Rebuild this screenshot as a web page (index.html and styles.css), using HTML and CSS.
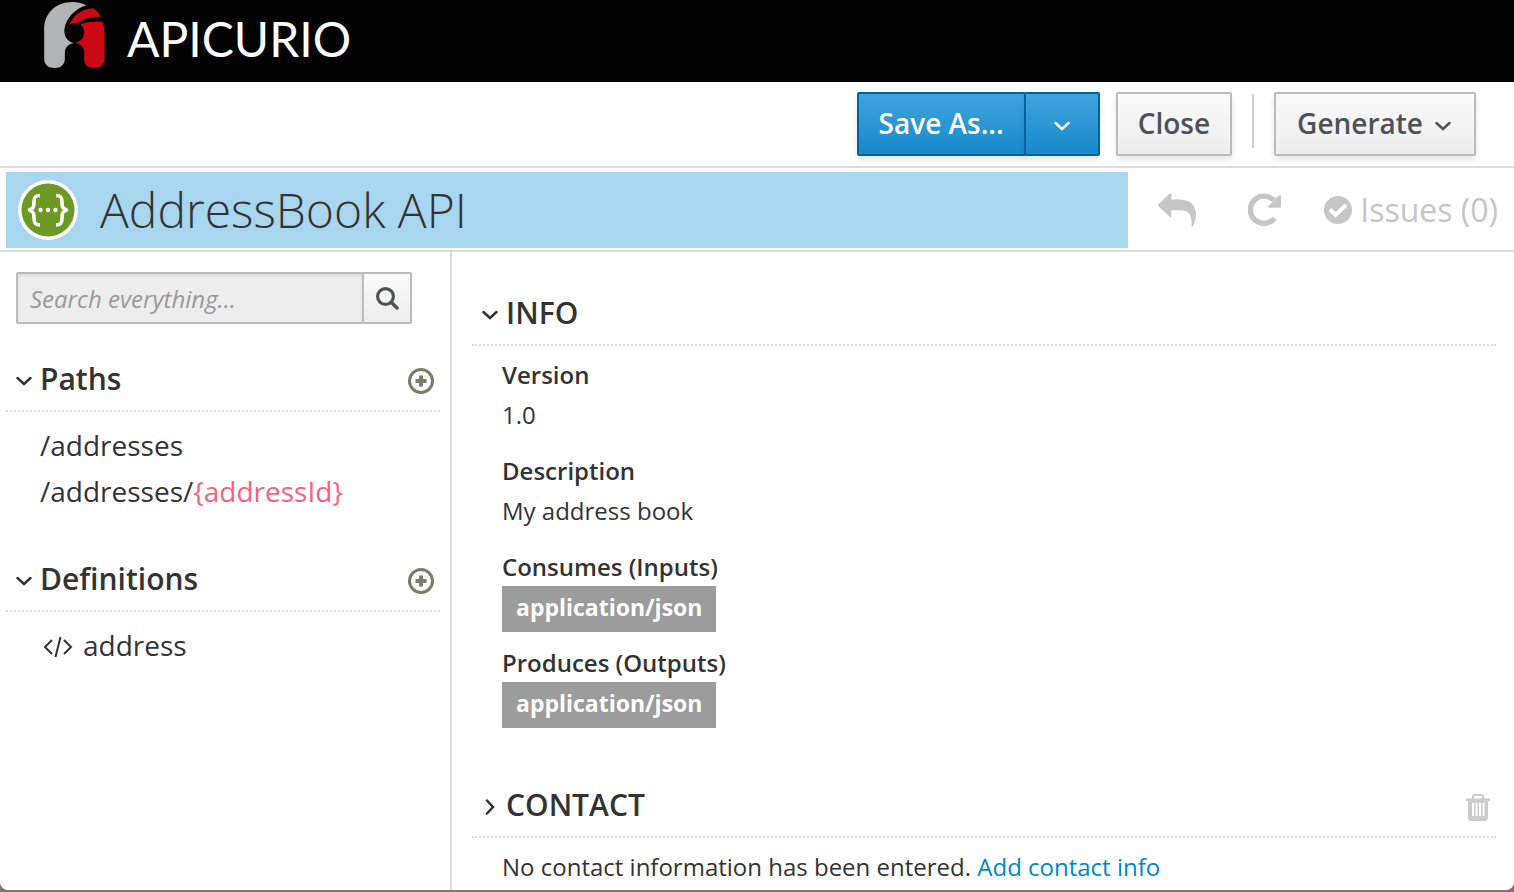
FILE: index.html
```html
<!DOCTYPE html>
<html lang="en">
<head>
<meta charset="utf-8">
<title>Apicurio - AddressBook API</title>
<link rel="stylesheet" href="styles.css">
</head>
<body>
<svg class="defs" aria-hidden="true">
  <symbol id="chev-down" viewBox="0 0 16 10"><path d="M1.500 2 8 8l6.500-6" fill="none" stroke="currentColor" stroke-width="2.500" stroke-linecap="round"/></symbol>
  <symbol id="chev-right" viewBox="0 0 10 16"><path d="M2 1.500 8 8l-6 6.500" fill="none" stroke="currentColor" stroke-width="2.500" stroke-linecap="round"/></symbol>
  <symbol id="plus" viewBox="0 0 26 26"><circle cx="13" cy="13" r="11.500" fill="none" stroke="currentColor" stroke-width="3"/><path d="M13 7.500v11M7.500 13h11" stroke="currentColor" stroke-width="4"/></symbol>
</svg>
<div class="window">
  <header class="masthead">
    <svg class="brand-mark" viewBox="42 7 182 198" aria-hidden="true">
      <path fill="#b1b3b5" d="M42 178V88C42 40 78 7 127 7c16 0 31 4 42 10-34 9-61 39-66 70-3 21 8 38 28 43-18 4-27 14-27 30v18c0 17-12 27-31 27s-31-10-31-27z"/>
      <path fill="#cb0813" d="M117 77c12-28 35-50 73-51 9 6 17 15 21 25-27-1-52 7-71 20-9-2-16 1-23 6z"/>
      <path fill="#cb0813" d="M152 74c20-8 43-10 65-7 4 10 6 20 6 32v79c0 17-12 27-31 27s-30-10-30-27v-18c0-17-9-27-27-30 28-6 35-36 17-56z"/>
    </svg>
    <span class="brand-name">APICURIO</span>
  </header>
  <div class="toolbar">
    <div class="split">
      <button class="btn primary">Save As...</button>
      <button class="btn primary toggle" aria-label="More save options"><svg class="chev"><use href="#chev-down"/></svg></button>
    </div>
    <button class="btn">Close</button>
    <span class="divider"></span>
    <button class="btn generate">Generate <svg class="chev"><use href="#chev-down"/></svg></button>
  </div>
  <div class="titlebar">
    <div class="title">
      <svg class="api-icon" viewBox="0 0 60 60" aria-hidden="true">
        <circle cx="30" cy="30" r="30" fill="#fff"/><circle cx="30" cy="30" r="26.500" fill="#6d9a25"/>
        <g fill="none" stroke="#fff" stroke-width="3.600" stroke-linejoin="round"><path d="M22 15.500c-5 0-6 2-6 6 0 5 0 7-4.500 8.500C16 31.500 16 34 16 38.500c0 4 1 6.500 6 6.500M38 15.500c5 0 6 2 6 6 0 5 0 7 4.500 8.500-4.500 1.500-4.500 4-4.500 8.500 0 4-1 6.500-6 6.500"/></g>
        <g fill="#fff"><circle cx="22.500" cy="30" r="2.200"/><circle cx="30" cy="30" r="2.200"/><circle cx="37.500" cy="30" r="2.200"/></g>
      </svg>
      <h1>AddressBook API</h1>
    </div>
    <div class="actions">
      <button class="icon-btn" aria-label="Undo"><svg width="38" height="34" viewBox="0 0 114 101"><path fill="currentColor" d="M1 33 35 1q4-2 5 2v16h28c28 1 46 19 46 45 0 15-5 28-10 36q-4 2-3-2c1-32-8-46-33-47H40v18q-1 5-5 2L1 39q-2-3 0-6z"/></svg></button>
      <button class="icon-btn redo" aria-label="Redo"><svg width="33" height="34" viewBox="0 0 99 102"><path fill="none" stroke="currentColor" stroke-width="16" d="M80 76A41 41 0 1 1 78 22"/><path fill="currentColor" d="M96 7q3 0 3 3v31q0 3-3 3H64q-5-1-2-5L92 8q2-2 4-1z"/></svg></button>
      <button class="icon-btn issues"><svg width="28" height="28" viewBox="0 0 28 28"><circle cx="14" cy="14" r="14" fill="currentColor"/><path d="m6 13.500 5.500 5.500L22 9" fill="none" stroke="#fff" stroke-width="4"/></svg>Issues (0)</button>
    </div>
  </div>
  <div class="body">
    <nav class="sidebar">
      <form class="search">
        <input type="text" aria-label="Search everything" placeholder="Search everything...">
        <button type="button" aria-label="Search"><svg width="23" height="23" viewBox="0 0 23 23"><g fill="none" stroke="currentColor"><circle cx="9.500" cy="9.500" r="7.900" stroke-width="3.200"/><path d="m15.500 15.500 5.500 5.500" stroke-width="3.600" stroke-linecap="round"/></g></svg></button>
      </form>
      <section class="nav-group">
        <h2 class="heading"><svg class="chev"><use href="#chev-down"/></svg>Paths<button class="icon-btn add" aria-label="Add path"><svg width="26" height="26"><use href="#plus"/></svg></button></h2>
        <ul>
          <li><a href="#">/addresses</a></li>
          <li><a href="#">/addresses/<span class="param">{addressId}</span></a></li>
        </ul>
      </section>
      <section class="nav-group">
        <h2 class="heading"><svg class="chev"><use href="#chev-down"/></svg>Definitions<button class="icon-btn add" aria-label="Add definition"><svg width="26" height="26"><use href="#plus"/></svg></button></h2>
        <ul>
          <li><a href="#" class="definition"><svg width="30" height="22" viewBox="0 0 30 22"><path d="M9 4 2 11l7 7M21 4l7 7-7 7M17.500 1l-5 20" fill="none" stroke="currentColor" stroke-width="2"/></svg>address</a></li>
        </ul>
      </section>
    </nav>
    <main class="content">
      <section>
        <h2 class="heading"><svg class="chev"><use href="#chev-down"/></svg>INFO</h2>
        <dl>
          <dt>Version</dt><dd>1.0</dd>
          <dt>Description</dt><dd>My address book</dd>
          <dt>Consumes (Inputs)</dt><dd><span class="tag">application/json</span></dd>
          <dt>Produces (Outputs)</dt><dd><span class="tag">application/json</span></dd>
        </dl>
      </section>
      <section>
        <h2 class="heading"><svg class="chev side"><use href="#chev-right"/></svg>CONTACT<button class="icon-btn trash" aria-label="Delete contact"><svg width="24" height="27" viewBox="0 0 24 27"><path fill="none" stroke="currentColor" stroke-width="2" d="M7 5V3q0-2 2-2h6q2 0 2 2v2"/><path fill="currentColor" fill-rule="evenodd" d="M0 4.500h24v2.500h-2V24q0 3-3 3H5q-3 0-3-3V7H0zM6 9v13h2V9zm3.500 0v13h2V9zm3.500 0v13h2V9zm3.500 0v13h2V9z"/></svg></button></h2>
        <p>No contact information has been entered. <a href="#">Add contact info</a></p>
      </section>
    </main>
  </div>
</div>
</body>
</html>
```
FILE: styles.css
```css
* { box-sizing: border-box; }
body { margin: 0; background: #777; color: #333; font: 24px/40px "Open Sans", sans-serif; }
h1, h2, ul, dl, dd, p { margin: 0; padding: 0; }
button, input { font-family: inherit; }
svg { display: block; flex: none; }
.defs { position: absolute; width: 0; height: 0; }
.window { display: flex; flex-direction: column; min-height: calc(100vh - 2px); background: #fff; border-radius: 0 0 8px 8px; overflow: hidden; }

.masthead { display: flex; align-items: center; gap: 22px; height: 82px; padding: 0 44px 12px; background: #030303; color: #fff; }
.brand-mark { width: 61px; height: 66px; }
.brand-name { font: 48px/60px Lato, sans-serif; padding-top: 8px; }

.toolbar { display: flex; justify-content: flex-end; align-items: flex-start; gap: 16px; height: 86px; padding: 10px 38px 0; border-bottom: 2px solid #dcdcdc; }
.split { display: flex; }
.btn { display: flex; align-items: center; gap: 12px; height: 64px; padding: 0 20px 2px; border: 2px solid #bbb; border-radius: 2px; background: linear-gradient(#fafafa, #ededed); color: #4d5258; font-size: 28px; font-weight: 600; box-shadow: 0 4px 6px rgba(3, 3, 3, .1); }
.btn.primary { border-color: #00659c; background: linear-gradient(#3ea5dc, #1888cc); color: #fff; }
.btn.toggle { width: 76px; margin-left: -2px; justify-content: center; }
.chev { width: 16px; height: 10px; }
.btn .chev { margin-top: 6px; }
.divider { width: 2px; height: 54px; margin: 2px 4px 0; background: #d1d1d1; }
.btn.generate { padding: 0 23px 2px 21px; }

.titlebar { display: flex; height: 84px; padding: 4px 0 2px 6px; border-bottom: 2px solid #dcdcdc; }
.title { display: flex; align-items: center; gap: 22px; flex: 1; padding-left: 12px; background: #a8d6ee; }
.api-icon { width: 60px; height: 60px; }
h1 { font-size: 48px; font-weight: 300; line-height: 60px; }
.icon-btn { display: flex; padding: 0; border: 0; background: none; color: #c6c6c6; }
.actions { display: flex; align-items: center; justify-content: space-between; width: 386px; padding: 0 16px 0 30px; }
.redo { padding-left: 8px; }
.issues { align-items: center; gap: 8px; font-size: 32px; line-height: 40px; }

.body { display: flex; flex: 1; }
.sidebar { width: 452px; padding: 20px 10px 0 6px; border-right: 2px solid #dcdcdc; }
.search { display: flex; width: 396px; height: 52px; margin: 0 0 32px 10px; border: 2px solid #bbb; border-radius: 2px; }
.search input { flex: 1; min-width: 0; padding: 0 12px; border: 0; background: #ededed; box-shadow: inset 0 2px 3px rgba(3, 3, 3, .08); font-size: 24px; }
.search input::placeholder { color: #999; font-style: italic; }
.search button { display: flex; align-items: center; justify-content: center; width: 48px; padding: 0; border: 0; border-left: 2px solid #bbb; background: linear-gradient(#fafafa, #ededed); color: #4d5258; }
.heading { display: flex; align-items: center; gap: 8px; height: 56px; padding: 0 6px 8px 10px; border-bottom: 2px dotted #dcdcdc; font-size: 30px; font-weight: 600; line-height: 40px; }
.heading .chev { margin-top: 4px; }
.heading .side { width: 16px; height: 16px; }
.add { margin: 4px 0 0 auto; color: #7b7b6a; }
.trash { margin: 4px 0 0 auto; color: #ccc; }
ul { list-style: none; padding: 10px 0 0 34px; margin-bottom: 42px; font-size: 28px; line-height: 46px; }
ul a { color: inherit; text-decoration: none; }
.param { color: #fa6180; }
.definition { display: flex; align-items: center; gap: 10px; padding-left: 3px; }
.definition svg { margin-top: 4px; }

.content { flex: 1; padding: 38px 18px 0 20px; }
dl { padding: 9px 0 0 30px; margin-bottom: 59px; }
dt { font-weight: 600; }
dd { display: flow-root; height: 40px; margin-bottom: 16px; }
.tag { display: table; height: 46px; margin-top: -1px; padding: 1px 14px 5px; background: #9c9c9c; color: #fff; font-size: 23px; font-weight: 700; }
.content p { padding: 9px 0 0 30px; }
.content p a { color: #0088ce; text-decoration: none; }
```
